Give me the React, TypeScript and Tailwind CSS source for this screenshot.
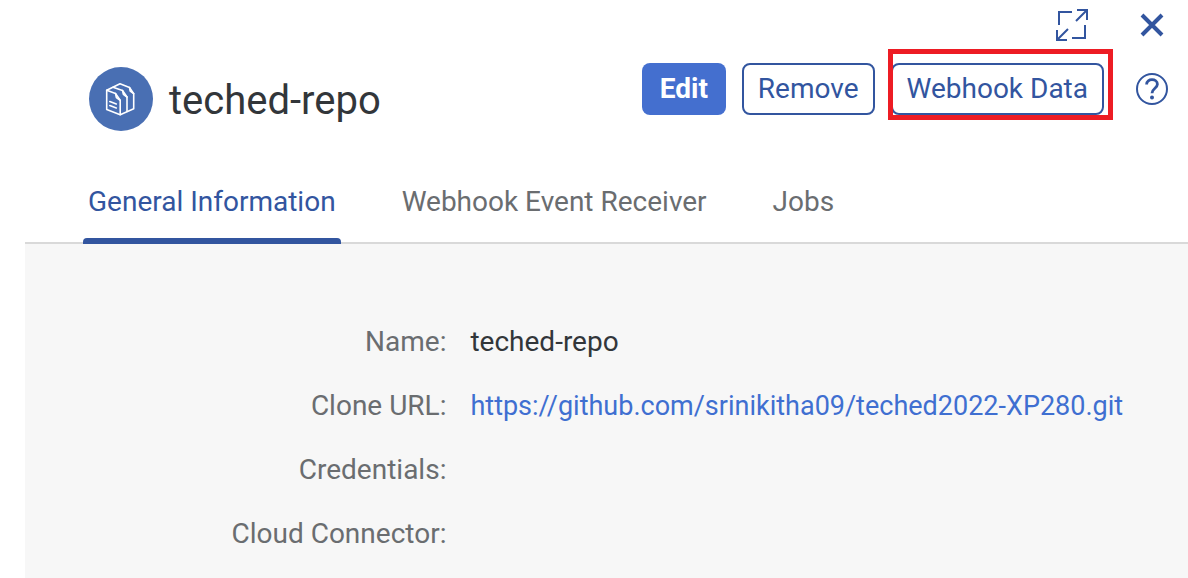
import React, { useState } from "react";

const tabs = ["General Information", "Webhook Event Receiver", "Jobs"];

const details: { label: string; value?: string; href?: string }[] = [
  { label: "Name:", value: "teched-repo" },
  {
    label: "Clone URL:",
    value: "https://github.com/srinikitha09/teched2022-XP280.git",
    href: "https://github.com/srinikitha09/teched2022-XP280.git",
  },
  { label: "Credentials:" },
  { label: "Cloud Connector:" },
];

function RepoIcon() {
  return (
    <svg viewBox="-1 -1 32 34" className="h-[34px] w-8" fill="none" stroke="#fff" strokeWidth="1.6" strokeLinejoin="round" strokeLinecap="round" aria-hidden="true">
      <path d="M0.7 7.3 L14 0.8 L23.5 4.5 L24.2 8 L27.7 10.7 V25.7 L14.2 31.7 L0.7 26.5 Z" />
      <path d="M0.7 7.3 L9.5 10.5 L10.4 14.5 L14.2 17.3 V31.7" />
      <path d="M7 4.3 L16.5 7.5 L17.4 11.3 L21 14 V28.5" />
      <path d="M9.5 10.5 L14.2 17.3 M16.5 7.5 L21 14 M23.5 4.5 L27.7 10.7" />
      <path d="M3.8 18.5 L10.3 21 M3.8 22.5 L10.3 25" />
    </svg>
  );
}

function ExpandIcon() {
  return (
    <svg viewBox="0 0 32 32" className="size-8" fill="none" stroke="#32559f" strokeWidth="2" aria-hidden="true">
      <path d="M16 3 H3 V16 M16 29 H29 V16" />
      <path d="M21 1 H31 V11 M31 1 L20 12 M1 21 V31 H11 M1 31 L12 20" />
    </svg>
  );
}

function CloseIcon() {
  return (
    <svg viewBox="0 0 32 32" className="size-8" fill="none" stroke="#32559f" strokeWidth="4" aria-hidden="true">
      <path d="M6 6 L26 26 M26 6 L6 26" />
    </svg>
  );
}

function HelpIcon() {
  return (
    <svg viewBox="0 0 32 32" className="size-8" fill="none" stroke="#32559f" aria-hidden="true">
      <circle cx="16" cy="16" r="15" strokeWidth="2" />
      <path d="M10.6 11.5 C10.6 5 21.4 5.3 21.4 11.3 C21.4 15.3 16 15.3 16 20.3" strokeWidth="2.8" />
      <circle cx="16" cy="24.5" r="2" fill="#32559f" stroke="none" />
    </svg>
  );
}

export default function App() {
  const [active, setActive] = useState(0);
  return (
    <main className="flex min-h-screen flex-col bg-white pl-[25px] font-[Roboto,sans-serif] text-[28px] leading-8 text-[#32363a]">
      <header className="pr-5 pl-16">
        <div className="flex items-center justify-end gap-12 pt-[9px]">
          <button type="button" aria-label="Full screen"><ExpandIcon /></button>
          <button type="button" aria-label="Close"><CloseIcon /></button>
        </div>
        <div className="flex items-start justify-between pt-[22px]">
          <div className="flex items-center gap-4 pt-1">
            <span className="flex size-16 items-center justify-center rounded-full bg-[#496fb3]"><RepoIcon /></span>
            <h1 className="pt-1 text-[40px] leading-12">teched-repo</h1>
          </div>
          <div className="flex items-center gap-4">
            <button type="button" className="h-13 rounded-lg bg-[#446fcf] px-[18px] font-bold text-white">Edit</button>
            <button type="button" className="h-13 rounded-lg border-2 border-[#32559f] px-3.5 text-[#32559f]">Remove</button>
            <div className="relative mr-4">
              <button type="button" className="h-13 rounded-lg border-2 border-[#32559f] px-3.5 text-[#32559f]">Webhook Data</button>
              <span className="pointer-events-none absolute -top-3.5 -right-[9px] -bottom-[5px] -left-[3px] border-5 border-[#ed1c24]" />
            </div>
            <button type="button" aria-label="Help"><HelpIcon /></button>
          </div>
        </div>
      </header>
      <nav role="tablist" className="mt-[53px] flex gap-14 border-b-2 border-[#d9d9d9] pl-[58px]">
        {tabs.map((tab, i) => (
          <button
            key={tab}
            type="button"
            role="tab"
            aria-selected={active === i}
            onClick={() => setActive(i)}
            className={active === i ? "relative h-[58px] px-[5px] pb-[22px] text-[#32559f]" : "relative h-[58px] px-[5px] pb-[22px] text-[#6a6d70]"}
          >
            {tab}
            {active === i && <span className="absolute inset-x-0 -bottom-0.5 h-1.5 rounded-t bg-[#32559f]" />}
          </button>
        ))}
      </nav>
      <section className="grow bg-[#f7f7f7] pt-[82px] pb-7">
        <dl className="grid grid-cols-[37fr_63fr] gap-x-6 gap-y-8">
          {details.map(({ label, value, href }) => (
            <React.Fragment key={label}>
              <dt className="text-right text-[#6a6d70]">{label}</dt>
              <dd>{href ? <a href={href} className="text-[27px] text-[#3f6fd1]">{value}</a> : value}</dd>
            </React.Fragment>
          ))}
        </dl>
      </section>
    </main>
  );
}
